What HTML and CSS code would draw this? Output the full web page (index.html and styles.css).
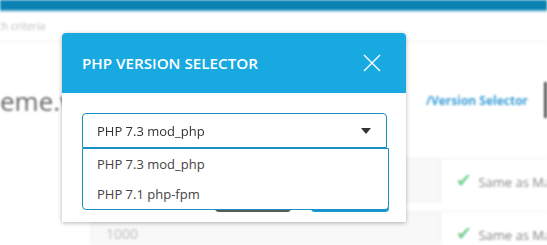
FILE: index.html
```html
<!DOCTYPE html>
<html lang="en">
<head>
    <meta charset="UTF-8">
    <title>PHP Version Selector</title>
    <link rel="stylesheet" href="styles.css">
</head>
<body>
    <div class="page">
        <div class="topbar"></div>
        <div class="crumbs">Search criteria</div>
        <div class="title-row">
            <span class="domain">freeme.website</span>
            <span class="link">/Version Selector</span>
            <span class="edge"></span>
        </div>
        <div class="table">
            <div class="row">
                <div class="cell-left"></div>
                <div class="cell-right"><span class="check">&#10004;</span> Same as Main</div>
            </div>
            <div class="row">
                <div class="cell-left">1000</div>
                <div class="cell-right"><span class="check">&#10004;</span> Same as Main</div>
            </div>
        </div>
    </div>

    <div class="modal">
        <div class="modal-header">
            <h2>PHP VERSION SELECTOR</h2>
            <svg class="close" width="18" height="18" viewBox="0 0 18 18">
                <path d="M1 1 L17 17 M17 1 L1 17" stroke="#fff" stroke-width="1.4" fill="none"/>
            </svg>
        </div>
        <div class="modal-body">
            <div class="select-wrap">
                <div class="select">
                    <span>PHP 7.3 mod_php</span>
                    <span class="arrow"></span>
                </div>
                <ul class="options">
                    <li>PHP 7.3 mod_php</li>
                    <li>PHP 7.1 php-fpm</li>
                </ul>
            </div>
            <div class="buttons">
                <button class="btn-cancel">Cancel</button>
                <button class="btn-save">Save</button>
            </div>
        </div>
    </div>
</body>
</html>
```

FILE: styles.css
```css
body {
    margin: 0;
    width: 547px;
    height: 245px;
    overflow: hidden;
    background: #fff;
    font-family: 'Open Sans', sans-serif;
    color: #333;
    position: relative;
}
.page {
    height: 245px;
    overflow: hidden;
    filter: blur(1.3px);
}
.topbar {
    height: 10px;
    background: #0a82b4;
    border-bottom: 2px solid #9fcde2;
}
.crumbs {
    height: 29px;
    line-height: 29px;
    margin-left: -25px;
    font-size: 10.5px;
    color: #bcbcbc;
    border-bottom: 1px solid #f0f0f0;
}
.title-row {
    height: 116px;
    display: flex;
    align-items: flex-start;
    padding-top: 46px;
    box-sizing: border-box;
}
.domain {
    margin-left: -34px;
    font-size: 26px;
    color: #6a6a6a;
    width: 460px;
    white-space: nowrap;
    line-height: 26px;
    overflow: hidden;
    flex-shrink: 0;
}
.link {
    font-size: 12px;
    font-weight: bold;
    color: #3d9fd8;
    line-height: 26px;
    white-space: nowrap;
    flex-shrink: 0;
}
.edge {
    margin-left: auto;
    width: 3px;
    height: 36px;
    margin-top: -6px;
    background: #555;
    flex-shrink: 0;
}
.table {
    display: flex;
    flex-direction: column;
    gap: 8px;
    margin-left: 90px;
}
.row {
    display: flex;
    height: 44px;
    flex-shrink: 0;
    background: #f8f8f8;
    border-top: 1px solid #f0f0f0;
}
.cell-left {
    width: 350px;
    box-sizing: border-box;
    flex-shrink: 0;
    font-size: 14px;
    color: #c4c4c4;
    padding-left: 16px;
    line-height: 44px;
}
.cell-right {
    flex: 1;
    min-width: 0;
    overflow: hidden;
    background: #fff;
    border-left: 1px solid #eee;
    font-size: 13px;
    color: #8a8a8a;
    line-height: 42px;
    padding-left: 15px;
    white-space: nowrap;
}
.check {
    color: #78d096;
    font-size: 19px;
    margin-right: 3px;
}
.modal {
    position: absolute;
    left: 62px;
    top: 33px;
    width: 344px;
    background: #fff;
    border-radius: 4px 4px 0 0;
    box-shadow: 0 1px 4px rgba(0,0,0,0.3);
}
.modal-header {
    height: 60px;
    background: #17a9e0;
    border-radius: 4px 4px 0 0;
    display: flex;
    align-items: center;
    justify-content: space-between;
    padding: 0 25px 0 20px;
}
.modal-header h2 {
    margin: 0;
    color: #fff;
    font-size: 15.2px;
    font-weight: 600;
}
.modal-body {
    padding: 20px 19px 10px 20px;
}
.select-wrap {
    position: relative;
}
.select {
    height: 35px;
    box-sizing: border-box;
    border: 1px solid #1990c2;
    border-radius: 4px 4px 0 0;
    display: flex;
    align-items: center;
    justify-content: space-between;
    padding: 0 15px 0 14px;
    font-size: 13px;
}
.arrow {
    width: 0;
    height: 0;
    border-left: 5px solid transparent;
    border-right: 5px solid transparent;
    border-top: 6px solid #333;
}
.options {
    position: absolute;
    left: 0;
    top: 35px;
    width: 307px;
    margin: 0;
    padding: 0;
    list-style: none;
    background: #fff;
    border: 1px solid #1990c2;
    border-radius: 0 0 4px 4px;
    box-sizing: border-box;
    z-index: 2;
}
.options li {
    height: 30px;
    line-height: 30px;
    padding-left: 14px;
    font-size: 13px;
    color: #444;
}
.buttons {
    display: flex;
    justify-content: flex-end;
    gap: 20px;
    margin-top: 30px;
    margin-right: -2px;
}
.buttons button {
    height: 34px;
    border: none;
    border-radius: 4px;
    color: #fff;
    font-family: 'Open Sans', sans-serif;
    font-size: 13px;
}
.btn-cancel {
    width: 76px;
    background: #5a5a5a;
}
.btn-save {
    width: 78px;
    background: #1798cc;
}
```
